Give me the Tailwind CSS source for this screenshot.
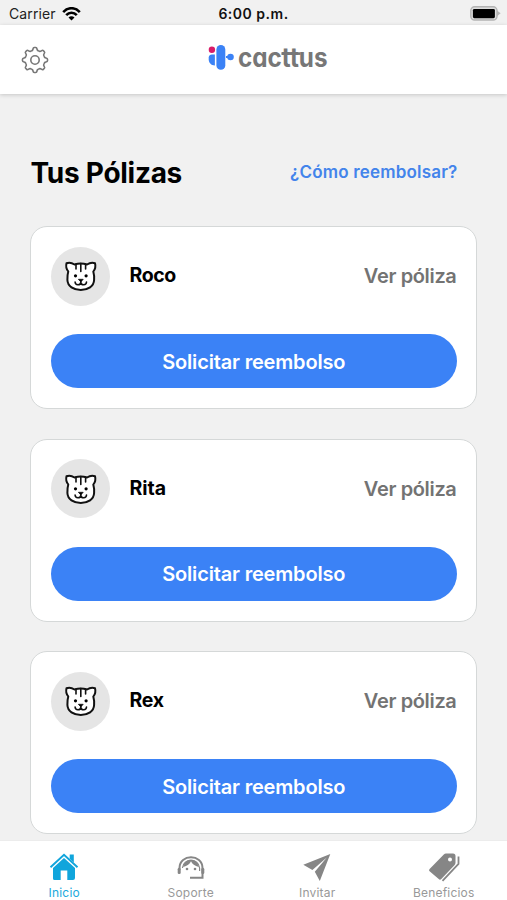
<!DOCTYPE html>
<html lang="es">
<head>
<meta charset="utf-8">
<title>Cacttus</title>
<script src="https://cdn.jsdelivr.net/npm/@tailwindcss/browser@4"></script>
</head>
<body class="h-[900px] w-[507px] overflow-hidden bg-[#f1f1f1] font-['Inter','Liberation_Sans',sans-serif] text-black flex flex-col">
<svg class="hidden">
  <symbol id="cat" viewBox="0 0 50 50">
    <path d="M10.5 12.2C13 11.2 16 11.8 18.5 13.5C22.5 12.2 27 12.2 31 13.5C33.5 11.8 36.5 11.2 39 12.2C39.8 15 39.3 18 37.3 20.5C38 23 38.3 26 38.1 29C37.8 35.5 32 38.9 24.8 38.9S11.7 35.5 11.4 29C11.3 26 11.5 23 12.3 20.5C10.3 18 9.8 15 10.5 12.2Z" fill="#fff" stroke="#111" stroke-width="2" stroke-linejoin="round"/>
    <path d="M20 13V18M24.8 12.5V20.5M29.6 13V18M24.8 29.7V32M19.1 31C19.3 34.5 24.3 34.5 24.8 31.5C25.3 34.5 30.3 34.5 30.5 31" fill="none" stroke="#111" stroke-width="1.6" stroke-linecap="round"/>
    <circle cx="19.5" cy="24.8" r="1.6"/><circle cx="30.1" cy="24.8" r="1.6"/>
    <path d="M22.4 28.3H27.2L24.8 30.9Z" stroke="#111" stroke-width=".8" stroke-linejoin="round"/>
  </symbol>
</svg>

<header class="shrink-0">
  <div class="grid h-[25px] grid-cols-3 items-center pt-[2px]">
    <div class="flex items-center pl-[9px] text-[14px] leading-none text-[#222]">
      <span class="tracking-[0.1px]">Carrier</span>
      <svg class="ml-[6px] h-[14px] w-[19px]" viewBox="0 0 19 14" fill="none" stroke="#000" stroke-width="2.6"><path d="M1.2 5.1C6-.1 13-.1 17.8 5.1M4.2 8.2C7.2 5 11.8 5 14.8 8.2"/><path d="M6.5 10.4C8.2 8.7 10.8 8.7 12.5 10.4L9.5 13.6Z" fill="#000" stroke="none"/></svg>
    </div>
    <div class="text-center text-[14px] font-semibold leading-none tracking-[0.5px] text-[#111]">6:00 p.m.</div>
    <div class="flex justify-end pr-[6px]">
      <svg class="h-[15px] w-[31px]" viewBox="0 0 31 15"><path d="M27 4.5L30.6 7.3L27 10.3Z" fill="#b5b5b5"/><rect x=".8" y=".8" width="26.2" height="13.2" rx="3.8" fill="#ddd" stroke="#b3b3b3" stroke-width="1.4"/><rect x="2.9" y="2.9" width="22" height="9.3" rx="1.4"/></svg>
    </div>
  </div>
  <div class="relative flex h-[69px] items-center bg-white shadow-[0_1px_4px_rgba(0,0,0,0.18)]">
    <svg class="ml-[21px] h-7 w-7" viewBox="-14 -14 28 28" fill="none" stroke="#777" stroke-width="1.6" stroke-linejoin="round">
      <path id="tooth" d="M-3.9-9.4C-2.8-9-2.2-9.9-2-11Q-1.7-12.5-.8-12.5H.8Q1.7-12.5 2-11C2.2-9.9 2.8-9 3.9-9.4"/>
      <use href="#tooth" transform="rotate(45)"/><use href="#tooth" transform="rotate(90)"/><use href="#tooth" transform="rotate(135)"/><use href="#tooth" transform="rotate(180)"/><use href="#tooth" transform="rotate(225)"/><use href="#tooth" transform="rotate(270)"/><use href="#tooth" transform="rotate(315)"/>
      <circle r="4.2"/>
    </svg>
    <svg class="ml-[158px] h-[36px] w-[124px]" viewBox="0 0 124 36">
      <circle cx="4.9" cy="7.8" r="3.2" fill="#d91c68"/>
      <path d="M7.9 12.4V23.4C4 23.4 1.7 20.6 1.7 17.2V15.5C1.7 13.5 3.2 12.4 5 12.4Z" fill="#3b82f6"/>
      <rect x="9.4" y="3" width="8.9" height="24.8" rx="4.4" fill="#3b82f6"/>
      <circle cx="23.5" cy="15" r="3.3" fill="#3b82f6"/>
      <rect x="19" y="14" width="2.5" height="2" fill="#3b82f6"/>
      <text x="31" y="24.8" class="text-[26.5px] font-bold [font-feature-settings:'cv11']" fill="#777" textLength="89.5" lengthAdjust="spacingAndGlyphs">cacttus</text>
      <path d="M74.5 11.6H93.5" stroke="#777" stroke-width="2.6"/>
    </svg>
  </div>
</header>

<main class="flex-1 overflow-hidden px-[30px]">
  <div class="mt-[59px] flex h-10 items-center justify-between pl-[0.5px] pr-[19.5px]">
    <h1 class="text-[28px] font-bold tracking-[-0.28px]">Tus Pólizas</h1>
    <a class="text-[17px] font-semibold tracking-[0.18px] text-[#4384eb]">¿Cómo reembolsar?</a>
  </div>
  <div class="mt-[33px] flex flex-col gap-[29.5px]">
    <section class="h-[183px] rounded-[17px] border border-[#d5d8d8] bg-white pl-5 pr-[19.5px] pt-[19px]">
      <div class="flex h-[60px] items-center">
        <div class="flex size-[59px] items-center justify-center rounded-full bg-[#e5e5e5]"><svg class="size-[50px]"><use href="#cat"/></svg></div>
        <h2 class="ml-[19.5px] text-[19.5px] font-bold tracking-[-0.4px]">Roco</h2>
        <a class="ml-auto text-[20px] font-semibold tracking-[-0.35px] text-[#737373]">Ver póliza</a>
      </div>
      <button class="mt-[28px] h-[54px] w-full rounded-full bg-[#3b82f6] pt-px text-[20px] font-semibold tracking-[-0.17px] text-white">Solicitar reembolso</button>
    </section>
    <section class="h-[183px] rounded-[17px] border border-[#d5d8d8] bg-white pl-5 pr-[19.5px] pt-[19px]">
      <div class="flex h-[60px] items-center">
        <div class="flex size-[59px] items-center justify-center rounded-full bg-[#e5e5e5]"><svg class="size-[50px]"><use href="#cat"/></svg></div>
        <h2 class="ml-[19.5px] text-[19.5px] font-bold">Rita</h2>
        <a class="ml-auto text-[20px] font-semibold tracking-[-0.35px] text-[#737373]">Ver póliza</a>
      </div>
      <button class="mt-[28px] h-[54px] w-full rounded-full bg-[#3b82f6] pt-px text-[20px] font-semibold tracking-[-0.17px] text-white">Solicitar reembolso</button>
    </section>
    <section class="h-[183px] rounded-[17px] border border-[#d5d8d8] bg-white pl-5 pr-[19.5px] pt-[19px]">
      <div class="flex h-[60px] items-center">
        <div class="flex size-[59px] items-center justify-center rounded-full bg-[#e5e5e5]"><svg class="size-[50px]"><use href="#cat"/></svg></div>
        <h2 class="ml-[19.5px] text-[19.5px] font-bold tracking-[-0.3px]">Rex</h2>
        <a class="ml-auto text-[20px] font-semibold tracking-[-0.35px] text-[#737373]">Ver póliza</a>
      </div>
      <button class="mt-[28px] h-[54px] w-full rounded-full bg-[#3b82f6] pt-px text-[20px] font-semibold tracking-[-0.17px] text-white">Solicitar reembolso</button>
    </section>
  </div>
</main>

<nav class="grid h-[60px] shrink-0 grid-cols-4 border-t border-[#ececec] bg-white pl-px text-[12px] leading-none tracking-[0.2px] text-[#999]">
  <a class="flex flex-col items-center pt-[11px] text-[#20a9dc]">
    <svg class="h-[30px] w-[30px]" viewBox="0 0 30 30" fill="#10a5dc"><path d="M15 6L26 16V26Q26 28 24 28H18.3V18.5H11.7V28H5.5Q4 28 4 26.5V16Z"/><path d="M1.5 15.2L15 2.8L28.5 15.2" fill="none" stroke="#10a5dc" stroke-width="1.9"/><path d="M20.7 2.5H24.8V10.4L20.7 6.7Z"/></svg>
    <span class="mt-[5px]">Inicio</span>
  </a>
  <a class="flex flex-col items-center pt-[11px]">
    <svg class="h-[30px] w-[30px]" viewBox="0 0 30 30" fill="none" stroke="#868686" stroke-width="2"><path d="M3.5 17.5V16C3.5 1.8 26.5 1.8 26.5 16V25.8H14"/><path d="M6.4 16C7.4 5.7 22.6 5.7 23.6 16V19" stroke-width="1.2"/><path d="M7.2 15C11.4 14 13.7 12 15 9.3C16.3 12.3 18.6 14 22.9 15C21.7 10.5 19.2 7.8 15 7.8S8.3 10.5 7.2 15Z" fill="#868686" stroke="none"/><rect x="1.7" y="16" width="3" height="6" rx="1.3" fill="#868686" stroke="none"/><rect x="25.3" y="16" width="3" height="6" rx="1.3" fill="#868686" stroke="none"/><circle cx="11" cy="17" r="1.3" fill="#868686" stroke="none"/><circle cx="19" cy="17" r="1.3" fill="#868686" stroke="none"/></svg>
    <span class="mt-[5px]">Soporte</span>
  </a>
  <a class="flex flex-col items-center pt-[11px]">
    <svg class="h-[30px] w-[30px]" viewBox="0 0 30 30" fill="#868686"><path d="M28.3 2L1.3 12.8L10.4 18L24.8 5.6L12.8 19.8L17.8 29Z"/></svg>
    <span class="mt-[5px]">Invitar</span>
  </a>
  <a class="flex flex-col items-center pt-[11px]">
    <svg class="h-[30px] w-[32px]" viewBox="0 0 32 30" fill="#868686"><path fill-rule="evenodd" d="M18 1.5H25Q27.5 1.5 27.5 4V10.7Q27.5 12.3 26.2 13.5L13.3 27.1Q12 28.4 10.7 27.1L1.6 19.3Q.4 18.1 1.6 16.9L15.8 2.5Q16.7 1.5 18 1.5ZM22 5.6A2 2 0 1 0 22 9.6A2 2 0 1 0 22 5.6Z"/><path d="M30.5 4.5V11.8L14.5 28.8" fill="none" stroke="#868686" stroke-width="1.8"/></svg>
    <span class="mt-[5px]">Beneficios</span>
  </a>
</nav>
</body>
</html>
